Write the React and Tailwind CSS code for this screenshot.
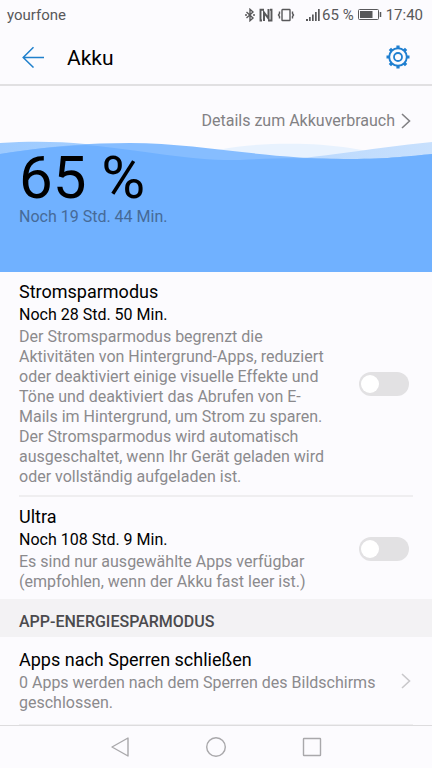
import { useState } from 'react'

function StatusBar() {
  return (
    <div className="flex h-[30px] items-center justify-between pl-[7px] pr-[9px] text-[15px] text-[#58585a]">
      <span>yourfone</span>
      <div className="flex items-center">
        <svg className="mr-1 h-[14px] w-[10px]" viewBox="0 0 10 14" fill="none" stroke="currentColor" strokeWidth="1.4">
          <path d="M1.500 4l6.500 6L5 12.700V1.300L8 4l-6.500 6" />
          <path d="M0 7h2M8 7h2" />
        </svg>
        <svg className="mr-1 h-[14px] w-[14px]" viewBox="0 0 14 14" fill="none" stroke="currentColor">
          <path d="M5 1.800H1.500v10.700H3M9 12.500h3.500V1.800H11" strokeWidth="1.900" />
          <path d="M5 13V4.500l4.500 6V1" strokeWidth="2" />
        </svg>
        <svg className="mr-[11px] h-[14px] w-[18px]" viewBox="0 0 18 14" fill="none" stroke="currentColor" strokeWidth="1.400">
          <rect x="5" y="1.500" width="8" height="11" rx=".5" />
          <path d="M2.500 3.500v2L1.500 7l1 1.500v2M15.500 3.500v2l1 1.500-1 1.500v2" />
        </svg>
        <svg className="mr-[2px] h-[14px] w-[14px]" viewBox="0 0 14 14" fill="currentColor">
          <path d="M0 11h2v2H0zM3 9h1.700v4H3zM6 6.500h1.700V13H6zM9 4h1.700v9H9zM12 1h1.700v12H12z" />
        </svg>
        <span>65 %</span>
        <svg className="mx-1 h-[12px] w-[24px]" viewBox="0 0 24 12" fill="none" stroke="currentColor">
          <rect x=".5" y=".5" width="20" height="10" rx="1" />
          <path d="M2 2h12.500v7H2z" fill="currentColor" stroke="none" />
          <path d="M22.500 3v5" strokeWidth="1.500" />
        </svg>
        <span>17:40</span>
      </div>
    </div>
  )
}

function Header() {
  return (
    <header className="flex h-[56px] items-center border-b-2 border-[#e1e0e2] px-[22px]">
      <button aria-label="Zurück" className="text-[#2080cc]">
        <svg className="size-[22px]" viewBox="0 0 22 22" fill="none" stroke="currentColor" strokeWidth="1.500">
          <path d="M22 11.500H1M11.500 1.200L1.200 11.500l10.300 10" />
        </svg>
      </button>
      <h1 className="ml-[23px] flex-1 pt-1 text-[21px] text-black">Akku</h1>
      <button aria-label="Einstellungen" className="text-[#1f7fd0]">
        <svg className="size-6" viewBox="0 0 24 24" fill="none" stroke="currentColor">
          <circle cx="12" cy="12" r="8.800" strokeWidth="1.900" />
          <circle cx="12" cy="12" r="4" strokeWidth="1.800" />
          <path
            d="M12 .5v3M12 20.500v3M.5 12h3M20.500 12h3M3.900 3.900L6 6M18 18l2.100 2.100M3.900 20.100L6 18M18 6l2.100-2.100"
            strokeWidth="3.200"
          />
        </svg>
      </button>
    </header>
  )
}

function Chevron({ className }) {
  return (
    <svg className={className} viewBox="0 0 10 16" fill="none" stroke="currentColor" strokeWidth="1.600">
      <path d="M1 1l7.500 7L1 15" />
    </svg>
  )
}

function BatteryLevel() {
  return (
    <div className="relative h-[131px] px-[19px] pt-2">
      <svg className="absolute inset-0 h-full w-full" viewBox="0 0 432 131" preserveAspectRatio="none">
        <defs>
          <linearGradient id="wave" x1="0" x2="1">
            <stop offset="0" stopColor="#9ccaff" />
            <stop offset="1" stopColor="#c8e0fd" />
          </linearGradient>
        </defs>
        <path d="M190 16C230 2 300-1 350 7S410 16 432 18V131H190z" fill="#e8f2fe" />
        <path d="M0 2C50-1 90 2 130 9S220 20 260 20S370 7 432 1V131H0z" fill="url(#wave)" />
        <path d="M0 13C50 5 90 2 130 2C200 2 260 18 350 18C390 18 410 15 432 13V131H0z" fill="#86bdff" />
        <path d="M0 13C30 8 60 5 86 4C150 10 190 20 240 19C290 16 320 18 350 18C390 18 410 15 432 13V131H0z" fill="#70b1ff" />
      </svg>
      <p className="relative text-[60px] leading-[58px] text-black">65 %</p>
      <p className="relative text-[16px] leading-5 text-[#466a97]">Noch 19 Std. 44 Min.</p>
    </div>
  )
}

function Toggle({ id }) {
  const [on, setOn] = useState(false)

  return (
    <label className="flex shrink-0 cursor-pointer">
      <input
        type="checkbox"
        role="switch"
        aria-labelledby={id}
        checked={on}
        onChange={(e) => setOn(e.target.checked)}
        className="peer sr-only"
      />
      <span className="flex h-6 w-[50px] items-center rounded-full bg-[#e2e1e3] px-[2px] peer-checked:justify-end peer-checked:bg-[#2080cc]">
        <span className="size-[18px] rounded-full bg-white" />
      </span>
    </label>
  )
}

function ModeRow({ id, title, time, text, className }) {
  return (
    <section className={className}>
      <div className="flex-1">
        <h2 id={id} className="text-[18px] leading-6 text-black">{title}</h2>
        <p className="mt-px text-[16px] leading-5 text-black">{time}</p>
        <p className="mt-[2px] text-[16px] leading-5 text-[#8b8a8d]">{text}</p>
      </div>
      <Toggle id={id} />
    </section>
  )
}

function NavBar() {
  return (
    <nav className="flex h-[43px] items-center justify-center gap-[72px] border-t border-[#dddcde] text-[#a9a8ab]">
      <button aria-label="Zurück">
        <svg className="size-6" viewBox="0 0 24 24" fill="none" stroke="currentColor" strokeWidth="1.400">
          <path d="M20 3v18L4 12z" strokeLinejoin="round" />
        </svg>
      </button>
      <button aria-label="Startbildschirm">
        <svg className="size-6" viewBox="0 0 24 24" fill="none" stroke="currentColor" strokeWidth="1.400">
          <circle cx="12" cy="12" r="9.300" />
        </svg>
      </button>
      <button aria-label="Letzte Apps">
        <svg className="size-6" viewBox="0 0 24 24" fill="none" stroke="currentColor" strokeWidth="1.400">
          <rect x="3.500" y="3.500" width="17" height="17" rx=".5" />
        </svg>
      </button>
    </nav>
  )
}

export default function App() {
  return (
    <div className="flex min-h-screen flex-col bg-[#fcfbfe] font-['Roboto',sans-serif]">
      <StatusBar />
      <Header />
      <main className="flex-1">
        <div className="flex h-[55px] items-center justify-end pr-[21px] pt-[14px]">
          <a href="#verbrauch" className="flex items-center gap-[6px] text-[16px] text-[#828184]">
            Details zum Akkuverbrauch
            <Chevron className="h-4 w-[10px]" />
          </a>
        </div>
        <BatteryLevel />
        <ModeRow
          id="stromsparmodus"
          title="Stromsparmodus"
          time="Noch 28 Std. 50 Min."
          text="Der Stromsparmodus begrenzt die Aktivitäten von Hintergrund-Apps, reduziert oder deaktiviert einige visuelle Effekte und Töne und deaktiviert das Abrufen von E-Mails im Hintergrund, um Strom zu sparen. Der Stromsparmodus wird automatisch ausgeschaltet, wenn Ihr Gerät geladen wird oder vollständig aufgeladen ist."
          className="mx-[19px] flex items-center gap-7 border-b-2 border-[#efeef0] pb-2 pr-1 pt-2"
        />
        <ModeRow
          id="ultra"
          title="Ultra"
          time="Noch 108 Std. 9 Min."
          text="Es sind nur ausgewählte Apps verfügbar (empfohlen, wenn der Akku fast leer ist.)"
          className="mx-[19px] flex items-center gap-7 pb-[7px] pr-1 pt-2"
        />
        <h2 className="bg-[#f3f2f4] px-[19px] pb-[5px] pt-[13px] text-[16px] leading-5 font-medium text-[#4b4a4d]">
          APP-ENERGIESPARMODUS
        </h2>
        <a href="#sperren" className="mx-[19px] flex items-center gap-5 border-b border-[#efeef0] pb-[11px] pr-[2px] pt-[11px]">
          <span className="flex-1">
            <span className="block text-[18px] leading-6 text-black">Apps nach Sperren schließen</span>
            <span className="mt-px block text-[16px] leading-5 text-[#8b8a8d]">
              0 Apps werden nach dem Sperren des Bildschirms geschlossen.
            </span>
          </span>
          <Chevron className="h-4 w-[10px] text-[#c9c8cb]" />
        </a>
      </main>
      <NavBar />
    </div>
  )
}
